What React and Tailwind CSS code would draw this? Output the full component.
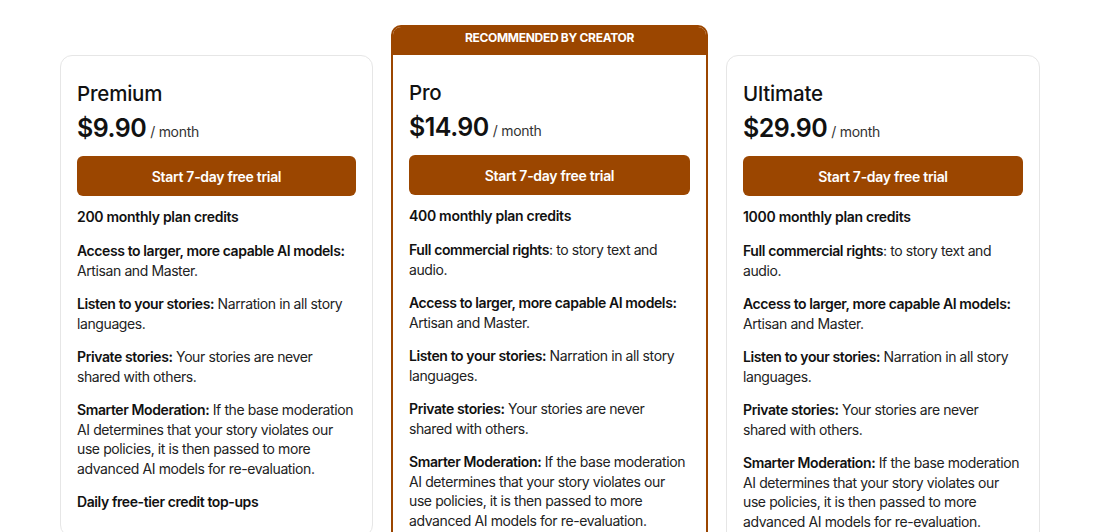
const plans = [
  {
    name: "Premium",
    price: "$9.90",
    credits: "200 monthly plan credits",
    features: [
      ["Access to larger, more capable AI models:", " Artisan and Master."],
      ["Listen to your stories:", " Narration in all story languages."],
      ["Private stories:", " Your stories are never shared with others."],
      [
        "Smarter Moderation:",
        " If the base moderation AI determines that your story violates our use policies, it is then passed to more advanced AI models for re-evaluation.",
      ],
      ["Daily free-tier credit top-ups", ""],
    ],
  },
  {
    name: "Pro",
    price: "$14.90",
    credits: "400 monthly plan credits",
    recommended: true,
    features: [
      ["Full commercial rights", ": to story text and audio."],
      ["Access to larger, more capable AI models:", " Artisan and Master."],
      ["Listen to your stories:", " Narration in all story languages."],
      ["Private stories:", " Your stories are never shared with others."],
      [
        "Smarter Moderation:",
        " If the base moderation AI determines that your story violates our use policies, it is then passed to more advanced AI models for re-evaluation.",
      ],
    ],
  },
  {
    name: "Ultimate",
    price: "$29.90",
    credits: "1000 monthly plan credits",
    features: [
      ["Full commercial rights", ": to story text and audio."],
      ["Access to larger, more capable AI models:", " Artisan and Master."],
      ["Listen to your stories:", " Narration in all story languages."],
      ["Private stories:", " Your stories are never shared with others."],
      [
        "Smarter Moderation:",
        " If the base moderation AI determines that your story violates our use policies, it is then passed to more advanced AI models for re-evaluation.",
      ],
    ],
  },
];

const PlanBody = ({ plan }) => (
  <div className="px-4 pt-6 pb-6">
    <h3 className="text-[20.5px] leading-7 font-medium text-[#111] mb-1 tracking-[-0.2px]">{plan.name}</h3>
    <div className="flex items-baseline gap-1 h-8">
      <span className="text-[25px] leading-8 font-semibold text-[#111] tracking-[-0.5px]">{plan.price}</span>
      <span className="text-[14px] text-[#333]">/ month</span>
    </div>
    <button className="mt-3 w-full h-10 rounded-md bg-[#9b4600] text-white text-[14px] font-semibold tracking-[-0.3px]">
      Start 7-day free trial
    </button>
    <p className="mt-[11px] text-[14px] leading-5 font-semibold text-[#111]">{plan.credits}</p>

    {/* Features */}
    <div className="mt-[14px] flex flex-col gap-[14px]">
      {plan.features.map(([label, rest], i) => (
        <p key={i} className="text-[14px] leading-[19.5px] text-[#222] tracking-[-0.4px]">
          <span className="font-semibold text-[#111]">{label}</span>
          {rest}
        </p>
      ))}
    </div>
  </div>
);

const App = () => {
  return (
    <div className="h-[532px] overflow-hidden bg-white font-['Inter',sans-serif] tracking-[-0.3px]">
      <div className="ml-[60px] w-[980px] grid grid-cols-[313px_317px_314px] gap-[18px] items-start pt-[25px]">
        {plans.map((plan) =>
          plan.recommended ? (
            <div key={plan.name} className="border-2 border-[#9b4600] rounded-[10px] overflow-hidden">
              <div className="h-[28px] bg-[#9b4600] pt-[4px] text-center text-white text-[12px] leading-[14px] font-bold tracking-[-0.3px] uppercase">
                Recommended by creator
              </div>
              <PlanBody plan={plan} />
            </div>
          ) : (
            <div key={plan.name} className="mt-[30px] border border-[#e6e6e6] rounded-xl">
              <PlanBody plan={plan} />
            </div>
          )
        )}
      </div>
    </div>
  );
};

export default App;
